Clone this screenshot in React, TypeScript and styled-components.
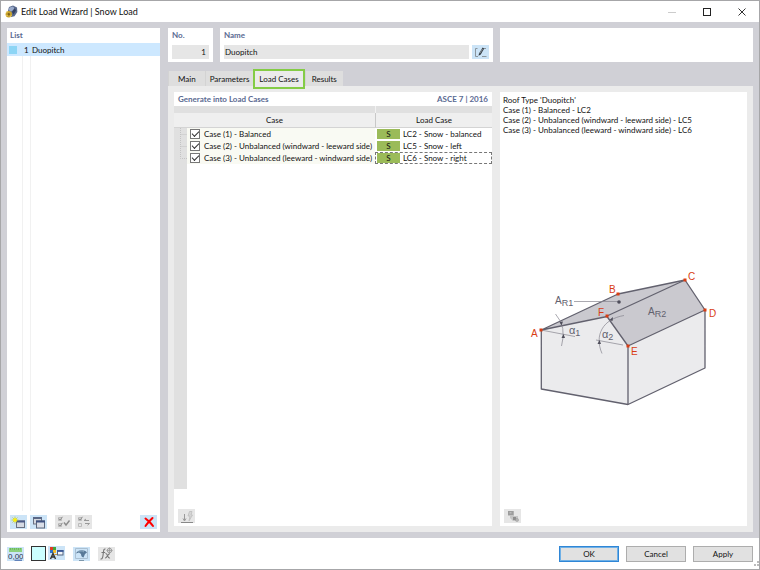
import React, { useState } from "react";
import styled, { createGlobalStyle, css } from "styled-components";

const GlobalStyle = createGlobalStyle`
  * { box-sizing: border-box; }
  body { margin: 0; background: #fff; }
  body, button, input, table { font-family: Lato, "Noto Sans", sans-serif; font-size: 8px; line-height: 12px; color: #111; }
  button { padding: 0; margin: 0; }
`;

const Window = styled.div`
  min-height: 100vh;
  display: flex;
  flex-direction: column;
  border: 1px solid #a6a6a8;
  background: #d0d0d6;
`;

const TitleBar = styled.header`
  height: 21px;
  display: flex;
  align-items: center;
  gap: 3px;
  padding: 0 0 0 4px;
  background: #fff;
`;

const Title = styled.h1`
  flex: 1;
  margin: 0;
  font-size: 9px;
  font-weight: 400;
  line-height: 12px;
`;

const WindowButtons = styled.div`
  display: flex;
`;

const WindowButton = styled.button`
  width: 35px;
  height: 20px;
  display: flex;
  align-items: center;
  justify-content: center;
  border: 0;
  background: transparent;
`;

const Body = styled.div`
  flex: 1;
  display: flex;
  gap: 8px;
  padding: 6px;
`;

const Panel = styled.section`
  display: flex;
  flex-direction: column;
  background: #fff;
  min-width: 0;
`;

const ListPanel = styled(Panel)`
  flex: 0 0 153px;
  padding: 0 0 3px;
`;

const Heading = styled.h2`
  margin: 0;
  font-size: 8px;
  line-height: 14px;
  font-weight: 700;
  color: #5a6a92;
`;

const ListHeading = styled(Heading)`
  padding: 0 3px;
  line-height: 15px;
`;

const ListBody = styled.div`
  flex: 1;
  display: flex;
  flex-direction: column;
  margin-bottom: 4px;
`;

const ListRow = styled.button`
  height: 13px;
  display: grid;
  grid-template-columns: 16px 8px 1fr;
  align-items: center;
  text-align: left;
  border: 0;
  background: #cde8ff;
`;

const Swatch = styled.span`
  width: 8px;
  height: 8px;
  margin-left: 2px;
  background: #8dd5f5;
`;

const ItemNumber = styled.span`
  padding-left: 1px;
`;

const ItemName = styled.span`
  padding-left: 1px;
`;

const ListColumns = styled.div`
  flex: 1;
  display: grid;
  grid-template-columns: 16px 8px 1fr;
`;

const ListColumn = styled.div`
  border-right: 1px solid #f1f1f1;
  &:last-child { border: 0; }
`;

const ToolRow = styled.div`
  display: flex;
  align-items: center;
  gap: 3px;
  padding: 0 3px;
`;

const Gap = styled.span<{ $fill?: boolean }>`
  flex: ${(p) => (p.$fill ? "1" : "0 0 2px")};
`;

const Tool = styled.button<{ $active?: boolean }>`
  width: 17px;
  height: 14px;
  flex: none;
  display: flex;
  align-items: center;
  justify-content: center;
  border: 0;
  background: ${(p) => (p.$active ? "#cce4f7" : "#e6e6e6")};
`;

const Main = styled.main`
  flex: 1;
  min-width: 0;
  display: flex;
  flex-direction: column;
`;

const TopRow = styled.div`
  display: grid;
  grid-template-columns: 45px minmax(0, 272fr) minmax(0, 253fr);
  gap: 7px;
  height: 34px;
`;

const Field = styled(Panel)`
  padding: 0 4px 3px;
`;

const FieldRow = styled.div`
  display: flex;
  align-items: center;
  gap: 3px;
  margin-top: 3px;
`;

const TextBox = styled.input<{ $right?: boolean }>`
  flex: 1;
  min-width: 0;
  height: 14px;
  padding: 0 3px 0 1px;
  border: 0;
  background: #e6e6e6;
  text-align: ${(p) => (p.$right ? "right" : "left")};
`;

const FieldLabel = styled.label`
  font-weight: 700;
  line-height: 14px;
  color: #5a6a92;
`;

const Tabs = styled.nav`
  display: flex;
  align-items: flex-start;
  height: 15px;
  margin-top: 9px;
`;

const Tab = styled.button<{ $active?: boolean }>`
  position: relative;
  height: 15px;
  padding: 1px 6px 0;
  border: 0;
  border-left: 1px solid #d3d3d3;
  background: #dedede;
  &:first-child { padding-left: 9px; padding-right: 9px; }
  &:nth-child(2) { padding: 1px 4px 0; }
  ${(p) =>
    p.$active &&
    css`
      height: 20px;
      padding: 0 4px;
      margin-top: -2px;
      border: 2px solid #84cc46;
      background: #ebebeb;
      z-index: 1;
    `}
`;

const TabContent = styled.div`
  flex: 1;
  display: grid;
  grid-template-columns: minmax(0, 318fr) minmax(0, 247fr);
  gap: 8px;
  padding: 6px;
  background: #ebebeb;
`;

const PanelTitle = styled.div`
  display: flex;
  justify-content: space-between;
  padding: 0 4px;
`;

const Grid = styled.table`
  width: 100%;
  table-layout: fixed;
  border-collapse: separate;
  border-spacing: 0;
`;

const TreeCol = styled.col` width: 13px; `;
const LoadCol = styled.col` width: 117px; `;

const StripCell = styled.th<{ $line?: boolean }>`
  height: 7px;
  padding: 0;
  background: #e0e0e0;
  border-left: ${(p) => (p.$line ? "1px solid #f2f2f2" : "0")};
`;

const HeadCell = styled.th<{ $line?: boolean }>`
  height: 15px;
  padding: 0;
  font-weight: 400;
  text-align: center;
  background: #efefef;
  border-bottom: 1px solid #d4d4d4;
  border-left: ${(p) => (p.$line ? "1px solid #c8c8c8" : "0")};
`;

const TreeCell = styled.td`
  height: 12px;
  padding: 0;
  background: #e0e0e0;
`;

const TreeSvg = styled.svg`
  display: block;
`;

const CaseCell = styled.td`
  height: 12px;
  padding: 0;
  background: #f9faf3;
`;

const LoadCell = styled.td<{ $focus?: boolean }>`
  height: 12px;
  padding: 0 0 0 2px;
  outline: ${(p) => (p.$focus ? "1px dashed #777" : "none")};
  outline-offset: -1px;
`;

const CheckLabel = styled.label`
  display: flex;
  align-items: center;
  gap: 4px;
  height: 12px;
  padding-left: 3px;
  white-space: nowrap;
`;

const Check = styled.input`
  appearance: none;
  width: 10px;
  height: 10px;
  margin: 0;
  flex: none;
  border: 1px solid #777;
  background: #fff;
  display: flex;
  align-items: center;
  justify-content: center;
  &:checked::before {
    content: "";
    width: 6px;
    height: 3px;
    margin-bottom: 2px;
    border-left: 1px solid #333;
    border-bottom: 1px solid #333;
    transform: rotate(-45deg);
  }
`;

const LoadEntry = styled.div`
  display: flex;
  align-items: center;
  gap: 3px;
  height: 12px;
  white-space: nowrap;
`;

const Tag = styled.span`
  width: 23px;
  height: 10px;
  line-height: 10px;
  text-align: center;
  background: #9bbb59;
`;

const TreeFill = styled.div`
  flex: 1;
  width: 13px;
  background: #e0e0e0;
`;

const PanelFooter = styled.div<{ $tall?: boolean }>`
  display: flex;
  align-items: flex-end;
  height: ${(p) => (p.$tall ? "37px" : "18px")};
  padding: 0 4px 3px;
`;

const Info = styled.p`
  margin: 0;
  padding: 3px 3px 0;
  line-height: 10px;
`;

const DrawingArea = styled.div`
  flex: 1;
  display: flex;
  align-items: center;
  justify-content: center;
  padding-top: 36px;
`;

const Drawing = styled.svg`
  width: 207px;
  height: 160px;
  font-family: "Liberation Sans", Arial, sans-serif;
`;

const Footer = styled.footer`
  height: 31px;
  display: flex;
  align-items: center;
  justify-content: space-between;
  padding: 0 0 0 6px;
  background: #fff;
`;

const FooterTools = styled.div`
  display: flex;
  align-items: center;
  gap: 8px;
`;

const ColorGroup = styled.div`
  display: flex;
  gap: 2px;
  margin-left: -1px;
`;

const ColorButton = styled.button`
  width: 15px;
  height: 15px;
  border: 1px solid #333;
  background: #ccffff;
`;

const Actions = styled.div`
  display: flex;
  gap: 7px;
`;

const Action = styled.button<{ $primary?: boolean }>`
  width: 60px;
  height: 16px;
  line-height: 12px;
  border: ${(p) => (p.$primary ? "1px solid #2f86d6" : "1px solid #adadad")};
  box-shadow: ${(p) => (p.$primary ? "inset 0 0 0 1px #6fb0e6" : "none")};
  background: #e1e1e1;
`;

const Grip = styled.svg`
  align-self: flex-end;
  margin-bottom: 1px;
`;

const CornerGroup = styled.div`
  align-self: stretch;
  display: flex;
  align-items: center;
`;

const AppIcon = () => (
  <svg width="13" height="13" viewBox="0 0 13 13" aria-hidden="true">
    <path d="M4 2 8 0.5 12 2.5 12.3 7 9.5 11.2 6 12 2.5 7.5z" fill="#59698c" />
    <path d="M4.5 2.4 8 1.5 10 4 6 6.5 3.5 5z" fill="#9aabcb" />
    <path d="M9.5 3 11 5.5 8.5 9.5 7 7z" fill="#34415f" />
    <circle cx="3.8" cy="9.2" r="3.2" fill="#c9a32d" />
    <circle cx="3.8" cy="9.2" r="1.2" fill="#806416" />
    <path d="M1 7.5 3 6.5M1 11 3 10M5 12 6.5 10" stroke="#f0d46a" strokeWidth="0.8" />
  </svg>
);

const EditIcon = () => (
  <svg width="13" height="12" viewBox="0 0 13 12" fill="none" aria-hidden="true">
    <path d="M3.500 2.500H1.500V10.500H4M8 10.500H12.500M10 2.500H12" stroke="#8b959d" />
    <path d="M4.500 9.800 5 7.400 8.600 1.500 10.200 2.400 6.800 8.400z" fill="#333c44" />
    <path d="M5.800 7.400 8.600 3" stroke="#a8b3bb" strokeWidth="0.7" />
  </svg>
);

const NewIcon = () => (
  <svg width="15" height="13" viewBox="0 0 15 13" aria-hidden="true">
    <rect x="5.5" y="5" width="8" height="6.5" fill="#d5dae4" stroke="#6a7182" />
    <path d="M5 5.5H14" stroke="#4a5a88" strokeWidth="2" />
    <path d="M4 0.5V7.5M0.5 4H7.5M1.5 1.5 6.5 6.5M6.5 1.5 1.5 6.5" stroke="#c3cc3e" strokeWidth="0.8" />
    <circle cx="4" cy="4" r="1.8" fill="#fff200" />
  </svg>
);

const CopyIcon = () => (
  <svg width="14" height="13" viewBox="0 0 14 13" aria-hidden="true">
    <rect x="1.5" y="1.5" width="8" height="6.5" fill="#d5d8df" stroke="#6a7182" />
    <path d="M1 2H10" stroke="#5a6785" strokeWidth="2" />
    <rect x="4.5" y="5" width="8" height="7" fill="#d9dee8" stroke="#5d667b" />
    <path d="M4 5.5H13" stroke="#3f5282" strokeWidth="2" />
  </svg>
);

const CheckAllIcon = () => (
  <svg width="14" height="12" viewBox="0 0 14 12" fill="none" aria-hidden="true">
    <path d="M1.5 1.5H4.5V4.5H1.5zM1.5 7.5H4.5V10.5H1.5z" stroke="#bbb" />
    <path d="M2 2.5 3 4 5.5 0.8M2 8.5 3 10 5.5 6.8" stroke="#888" />
    <path d="M7 6.5 9 9 12.5 4.5" stroke="#8c8c8c" strokeWidth="1.4" />
  </svg>
);

const InvertIcon = () => (
  <svg width="14" height="12" viewBox="0 0 14 12" fill="none" aria-hidden="true">
    <path d="M1.5 1.5H4.5V4.5H1.5zM1.5 7.5H4.5V10.5H1.5z" stroke="#bbb" />
    <path d="M2 2.5 3 4 5.5 0.8" stroke="#888" />
    <path d="M7 4.500H12M7 4.500 9 3M12.500 7.500H8M12.500 7.500 10.500 9.200" stroke="#999" />
  </svg>
);

const DeleteIcon = () => (
  <svg width="12" height="12" viewBox="0 0 12 12" aria-hidden="true">
    <path d="M2.500 2.500C5 4.500 8 7 10 10M9.500 2C7 4.500 4.500 7 2.500 10" stroke="#f00" strokeWidth="2" fill="none" strokeLinecap="round" />
  </svg>
);

const LoadIcon = () => (
  <svg width="14" height="13" viewBox="0 0 14 13" fill="none" aria-hidden="true">
    <path d="M1 12.5H13" stroke="#888" />
    <path d="M4.500 4V10M3 8.500 4.500 11 6 8.500" stroke="#9a9a9a" />
    <path d="M12 1.500H9.500L8 6H10L9 11 12.500 5H11z" fill="#d6d6d6" stroke="#bcbcbc" strokeWidth="0.8" />
  </svg>
);

const ImageIcon = () => (
  <svg width="14" height="13" viewBox="0 0 14 13" aria-hidden="true">
    <path d="M2 1H8V6H12V11H7L4 8V6H2z" fill="#c4c4c4" />
    <rect x="2" y="1" width="5.500" height="4" fill="#9c9c9c" />
    <path d="M3.500 2H5.500V3.500H3.500z" fill="#bbb" />
    <path d="M7 7H10V10H7z" fill="#8d8d8d" />
    <circle cx="11" cy="10" r="1.800" fill="#999" />
    <circle cx="11" cy="10" r="0.700" fill="#ddd" />
  </svg>
);

const UnitsIcon = () => (
  <svg width="15" height="14" viewBox="0 0 15 14" aria-hidden="true">
    <rect x="1" y="1" width="13" height="4" fill="#8bd07d" />
    <path d="M2.5 1V3M4.5 1V2.5M6.5 1V3M8.5 1V2.5M10.5 1V3M12.5 1V2.5" stroke="#5fae52" strokeWidth="0.7" />
    <text x="0" y="12" fontSize="8" fontFamily="Liberation Sans, sans-serif" fill="#26364f">0,00</text>
    <path d="M6.5 13.2H14" stroke="#3457a0" />
  </svg>
);

const DisplayIcon = () => (
  <svg width="15" height="14" viewBox="0 0 15 14" aria-hidden="true">
    <rect x="1" y="1" width="3" height="3" fill="#e03a24" />
    <rect x="4" y="4" width="3" height="3" fill="#f6bd27" />
    <rect x="1" y="4" width="3" height="3" fill="#2c72cf" />
    <rect x="4" y="1" width="3" height="3" fill="#41a63b" />
    <path d="M1.5 13 4 7.5 6.5 13M2.500 11H5.500" stroke="#333" fill="none" strokeWidth="1.4" />
    <rect x="8.5" y="4.5" width="5.5" height="4.5" fill="#f2f5fa" stroke="#53627f" />
    <path d="M8 5H14.5" stroke="#395799" strokeWidth="1.8" />
    <path d="M5.5 8.5H8" stroke="#d49a33" />
  </svg>
);

const ViewIcon = () => (
  <svg width="15" height="14" viewBox="0 0 15 14" fill="none" aria-hidden="true">
    <path d="M1.500 1.500H13.500V11.500H1.500z" stroke="#a9bfd2" />
    <path d="M2 6.500C3 2.500 11 2 13 5.500L11 7 9.500 10.500C7.500 10 7 8.500 7 7L5 5.500z" fill="#587998" />
    <path d="M4 5.2C6 3.500 8 3.500 10 5" stroke="#8eabc2" />
    <path d="M5 13.500H10" stroke="#7d97ab" />
  </svg>
);

const FormulaIcon = () => (
  <svg width="15" height="14" viewBox="0 0 15 14" fill="none" aria-hidden="true">
    <path d="M6.5 2C4.5 1.5 4.6 4 4.2 7C3.9 10 3.5 12.5 1.5 12M2.5 5.5H6.2" stroke="#777" strokeWidth="1.1" />
    <path d="M6.5 6.5C9 5.8 8 11.8 11 11M11 6.5C8.5 7 8 11.5 6 11" stroke="#777" strokeWidth="1.1" />
    <circle cx="10.5" cy="3.5" r="2.2" stroke="#999" />
    <path d="M10.5 0.5V6.5M7.5 3.5H13.5" stroke="#999" strokeWidth="0.8" />
  </svg>
);

const corners: [string, number, number, number, number][] = [
  ["A", 21, 70, 11, 77],
  ["B", 98, 34, 89, 33],
  ["C", 165, 20, 168, 20],
  ["D", 185, 50, 189, 57],
  ["E", 108, 86, 111, 95],
  ["F", 87, 56, 78, 56],
];

const RoofDrawing = () => (
  <Drawing viewBox="0 0 207 160" role="img" aria-label="Duopitch roof">
    <path d="M21 70 87 56 108 86V144.500L21 129z" fill="#ebebed" />
    <path d="M108 86 185 50V108L108 144.500z" fill="#ebebed" />
    <path d="M21 70 98 34 165 20 87 56z" fill="#cac9cf" />
    <path d="M87 56 165 20 185 50 108 86z" fill="#cac9cf" />
    <g fill="none" stroke="#62616e" strokeWidth="1.3" strokeLinejoin="round">
      <path d="M21.300 70 98 34 165 20 185 50V108L108 144.500 21.300 129V70L87 56.500 108 86 185 50" />
      <path d="M87 56 165 20M108 86V144.500" />
    </g>
    <g fill="none" stroke="#85848e" strokeWidth="0.7">
      <path d="M54 41.500H98M21 70 55 76.500M35.500 54Q47 67 41.500 86M76 80 103 85M104 55.500C83 59 74 75 82 93.500" />
    </g>
    <g fill="#4e4d5a">
      <circle cx="99" cy="42" r="1.800" />
      <path d="M39.500 62 43 61.500 41.500 65.500zM43.500 74 45 78 41.500 78zM89.500 60 93 57 92.500 61zM79.500 80 81 84 77.500 84z" />
    </g>
    <g fill="#62616e" fontSize="10">
      <text x="35" y="44">A<tspan fontSize="9" dy="2">R1</tspan></text>
      <text x="128" y="55">A<tspan fontSize="9" dy="2">R2</tspan></text>
      <text x="49" y="74" fontSize="11">α<tspan fontSize="9" dy="2">1</tspan></text>
      <text x="82" y="78" fontSize="11">α<tspan fontSize="9" dy="2">2</tspan></text>
    </g>
    {corners.map(([name, x, y, tx, ty]) => (
      <g key={name} fill="#d93d13">
        <rect x={x - 1.5} y={y - 1.5} width="3" height="3" />
        <text x={tx} y={ty} fontSize="10">{name}</text>
      </g>
    ))}
  </Drawing>
);

const cases = [
  { name: "Case (1) - Balanced", load: "LC2 - Snow - balanced" },
  { name: "Case (2) - Unbalanced (windward - leeward side)", load: "LC5 - Snow - left" },
  { name: "Case (3) - Unbalanced (leeward - windward side)", load: "LC6 - Snow - right" },
];

const tabs = ["Main", "Parameters", "Load Cases", "Results"];

export default function App() {
  const [tab, setTab] = useState("Load Cases");
  return (
    <>
      <GlobalStyle />
      <Window>
        <TitleBar>
          <AppIcon />
          <Title>Edit Load Wizard | Snow Load</Title>
          <WindowButtons>
            <WindowButton aria-label="Minimize">
              <svg width="8" height="8"><path d="M0 4.500H8" stroke="#ccc" /></svg>
            </WindowButton>
            <WindowButton aria-label="Maximize">
              <svg width="8" height="8"><rect x="0.500" y="0.500" width="7" height="7" fill="none" stroke="#222" /></svg>
            </WindowButton>
            <WindowButton aria-label="Close">
              <svg width="8" height="8"><path d="M0.500 0.500 7.500 7.500M7.500 0.500 0.500 7.500" stroke="#333" /></svg>
            </WindowButton>
          </WindowButtons>
        </TitleBar>
        <Body>
          <ListPanel>
            <ListHeading>List</ListHeading>
            <ListBody>
              <ListRow>
                <Swatch />
                <ItemNumber>1</ItemNumber>
                <ItemName>Duopitch</ItemName>
              </ListRow>
              <ListColumns><ListColumn /><ListColumn /><ListColumn /></ListColumns>
            </ListBody>
            <ToolRow>
              <Tool $active aria-label="New"><NewIcon /></Tool>
              <Tool $active aria-label="Copy"><CopyIcon /></Tool>
              <Gap />
              <Tool aria-label="Select all"><CheckAllIcon /></Tool>
              <Tool aria-label="Invert selection"><InvertIcon /></Tool>
              <Gap $fill />
              <Tool $active aria-label="Delete"><DeleteIcon /></Tool>
            </ToolRow>
          </ListPanel>
          <Main>
            <TopRow>
              <Field>
                <FieldLabel htmlFor="no">No.</FieldLabel>
                <FieldRow><TextBox id="no" $right defaultValue="1" /></FieldRow>
              </Field>
              <Field>
                <FieldLabel htmlFor="name">Name</FieldLabel>
                <FieldRow>
                  <TextBox id="name" defaultValue="Duopitch" />
                  <Tool $active aria-label="Edit name"><EditIcon /></Tool>
                </FieldRow>
              </Field>
              <Panel />
            </TopRow>
            <Tabs>
              {tabs.map((t) => (
                <Tab key={t} $active={t === tab} onClick={() => setTab(t)}>{t}</Tab>
              ))}
            </Tabs>
            <TabContent>
              <Panel>
                <PanelTitle>
                  <Heading>Generate into Load Cases</Heading>
                  <Heading>ASCE 7 | 2016</Heading>
                </PanelTitle>
                <Grid>
                  <colgroup><TreeCol /><col /><LoadCol /></colgroup>
                  <thead>
                    <tr><StripCell colSpan={2} /><StripCell $line /></tr>
                    <tr><HeadCell colSpan={2}>Case</HeadCell><HeadCell $line>Load Case</HeadCell></tr>
                  </thead>
                  <tbody>
                    {cases.map((c, i) => (
                      <tr key={c.name}>
                        <TreeCell>
                          <TreeSvg width="13" height="12" aria-hidden="true">
                            <path d={i === 2 ? "M6.500 0V6.500H13" : "M6.500 0V12M6.500 6.500H13"} fill="none" stroke="#c4c4c4" strokeDasharray="1 1" />
                          </TreeSvg>
                        </TreeCell>
                        <CaseCell>
                          <CheckLabel><Check type="checkbox" defaultChecked />{c.name}</CheckLabel>
                        </CaseCell>
                        <LoadCell $focus={i === 2}>
                          <LoadEntry><Tag>S</Tag>{c.load}</LoadEntry>
                        </LoadCell>
                      </tr>
                    ))}
                  </tbody>
                </Grid>
                <TreeFill />
                <PanelFooter $tall>
                  <Tool aria-label="Loads"><LoadIcon /></Tool>
                </PanelFooter>
              </Panel>
              <Panel>
                <Info>
                  Roof Type 'Duopitch'<br />
                  Case (1) - Balanced - LC2<br />
                  Case (2) - Unbalanced (windward - leeward side) - LC5<br />
                  Case (3) - Unbalanced (leeward - windward side) - LC6
                </Info>
                <DrawingArea><RoofDrawing /></DrawingArea>
                <PanelFooter>
                  <Tool aria-label="Picture"><ImageIcon /></Tool>
                </PanelFooter>
              </Panel>
            </TabContent>
          </Main>
        </Body>
        <Footer>
          <FooterTools>
            <Tool $active aria-label="Units"><UnitsIcon /></Tool>
            <ColorGroup>
              <ColorButton aria-label="Color" />
              <Tool $active aria-label="Display"><DisplayIcon /></Tool>
            </ColorGroup>
            <Tool $active aria-label="View"><ViewIcon /></Tool>
            <Tool aria-label="Formula"><FormulaIcon /></Tool>
          </FooterTools>
          <CornerGroup>
            <Actions>
              <Action $primary>OK</Action>
              <Action>Cancel</Action>
              <Action>Apply</Action>
            </Actions>
            <Grip width="6" height="7" aria-hidden="true">
              <path d="M4 0H6V2H4zM4 3H6V5H4zM1 3H3V5H1z" fill="#bbb" />
            </Grip>
          </CornerGroup>
        </Footer>
      </Window>
    </>
  );
}
